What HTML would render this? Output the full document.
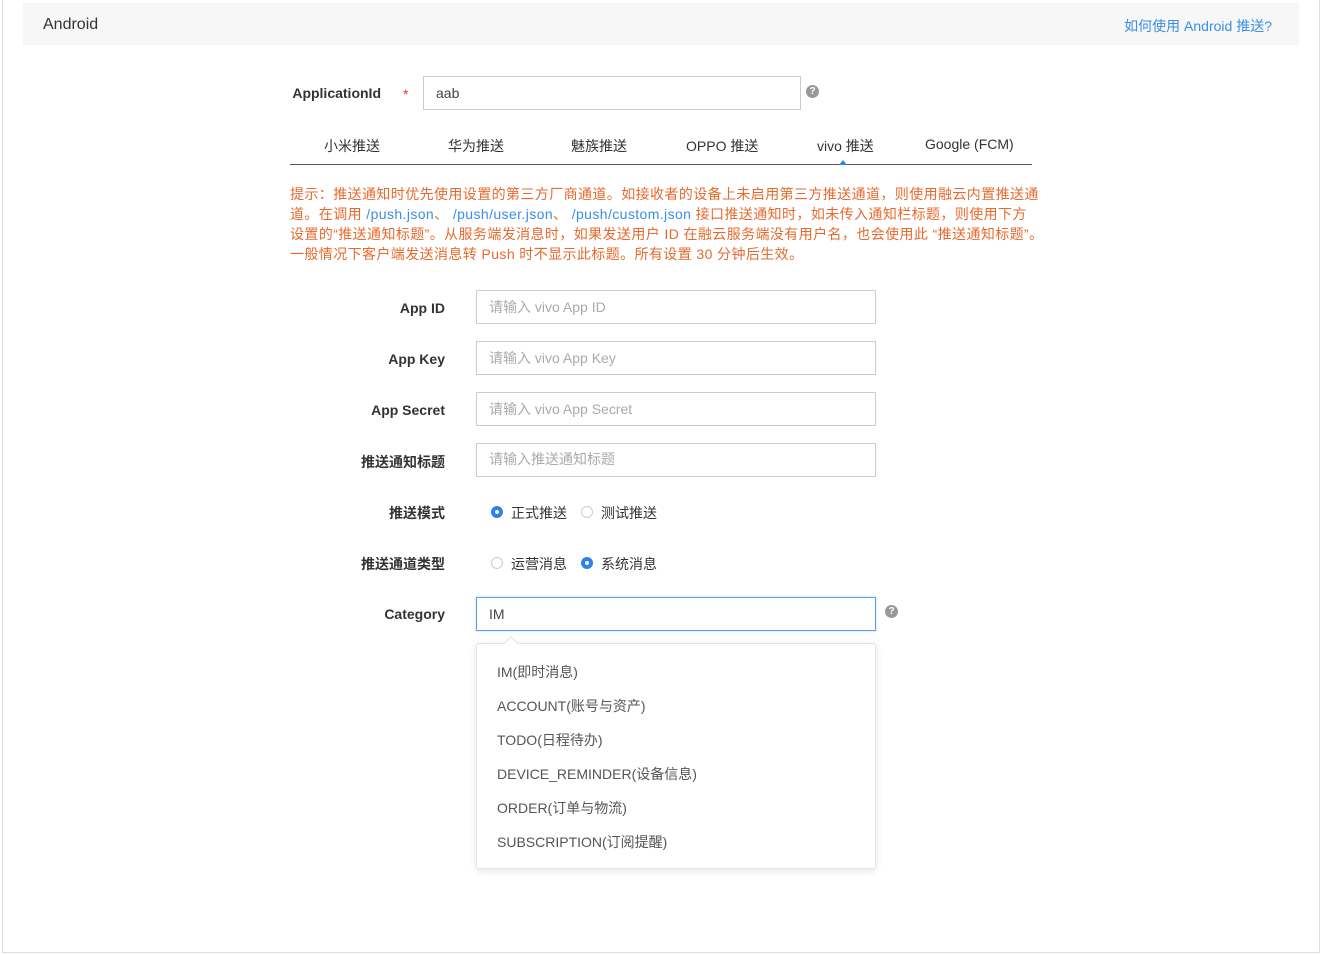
<!DOCTYPE html>
<html><head><meta charset="utf-8"><style>
*{box-sizing:border-box;margin:0;padding:0}
body{width:1323px;height:955px;background:#fff;font-family:"Liberation Sans","Noto Sans CJK SC",sans-serif;font-size:14px;color:#333;position:relative;overflow:hidden}
.frame{position:absolute;left:2px;top:0;width:1318px;height:953px;border-left:1px solid #ddd;border-right:1px solid #ddd;border-bottom:1px solid #ddd}
.hdr{position:absolute;left:23px;top:3px;width:1276px;height:42px;background:#f7f7f7}
.hdr .t{position:absolute;left:20px;top:13px;font-size:16px;color:#333}
.hdr a{position:absolute;right:27px;top:13px;color:#3a8ee6;font-size:14px;text-decoration:none}
.a{position:absolute}
.lbl{position:absolute;font-weight:bold;color:#333;text-align:right;width:150px}
.inp{position:absolute;border:1px solid #ccc;height:34px;padding-left:12px;line-height:32px;color:#aaa;background:#fff}
.q{position:absolute;width:13px;height:13px;border-radius:50%;background:#999;color:#fff;font-size:10px;font-weight:bold;text-align:center;line-height:13px}
.tab{position:absolute;top:136px;color:#333}
.tip{position:absolute;left:290px;top:184px;color:#e8692d;line-height:20px;font-size:14px;white-space:nowrap;letter-spacing:0.4px}
.tip span{color:#3a8ee6}
.r{position:absolute;width:12px;height:12px;border-radius:50%;border:1px solid #ccc;background:#fff}
.r.on{border:4px solid #2f7ff0;background:#fff}
.dd{position:absolute;left:476px;top:643px;width:400px;height:226px;border:1px solid #e4e4e4;border-radius:3px;box-shadow:0 2px 8px rgba(0,0,0,.1);background:#fff}
.dd div{position:absolute;left:20px;color:#555}
</style></head><body>
<div class="frame"></div>
<div class="hdr"><div class="t">Android</div><a>如何使用 Android 推送?</a></div>

<div class="lbl" style="left:231px;top:85px">ApplicationId</div>
<div class="a" style="left:403px;top:86px;color:#e33">*</div>
<div class="inp" style="left:423px;top:76px;width:378px;color:#444">aab</div>
<div class="q" style="left:806px;top:85px">?</div>

<div class="tab" style="left:324px">小米推送</div>
<div class="tab" style="left:448px">华为推送</div>
<div class="tab" style="left:571px">魅族推送</div>
<div class="tab" style="left:686px">OPPO 推送</div>
<div class="tab" style="left:817px">vivo 推送</div>
<div class="tab" style="left:925px">Google (FCM)</div>
<div class="a" style="left:290px;top:164px;width:742px;height:1px;background:#555"></div>
<div class="a" style="left:839px;top:160px;width:0;height:0;border-left:4px solid transparent;border-right:4px solid transparent;border-bottom:5px solid #2f7ff0"></div>

<div class="tip">提示：推送通知时优先使用设置的第三方厂商通道。如接收者的设备上未启用第三方推送通道，则使用融云内置推送通<br>道。在调用 <span>/push.json</span>、 <span>/push/user.json</span>、 <span>/push/custom.json</span> 接口推送通知时，如未传入通知栏标题，则使用下方<br>设置的“推送通知标题”。从服务端发消息时，如果发送用户 ID 在融云服务端没有用户名，也会使用此 “推送通知标题”。<br>一般情况下客户端发送消息转 Push 时不显示此标题。所有设置 30 分钟后生效。</div>

<div class="lbl" style="left:295px;top:300px">App ID</div>
<div class="inp" style="left:476px;top:290px;width:400px">请输入 vivo App ID</div>
<div class="lbl" style="left:295px;top:351px">App Key</div>
<div class="inp" style="left:476px;top:341px;width:400px">请输入 vivo App Key</div>
<div class="lbl" style="left:295px;top:402px">App Secret</div>
<div class="inp" style="left:476px;top:392px;width:400px">请输入 vivo App Secret</div>
<div class="lbl" style="left:295px;top:452px">推送通知标题</div>
<div class="inp" style="left:476px;top:443px;width:400px;line-height:31px">请输入推送通知标题</div>

<div class="lbl" style="left:295px;top:503px">推送模式</div>
<div class="r on" style="left:491px;top:506px"></div><div class="a" style="left:511px;top:503px">正式推送</div>
<div class="r" style="left:581px;top:506px"></div><div class="a" style="left:601px;top:503px">测试推送</div>
<div class="lbl" style="left:295px;top:554px">推送通道类型</div>
<div class="r" style="left:491px;top:557px"></div><div class="a" style="left:511px;top:554px">运营消息</div>
<div class="r on" style="left:581px;top:557px"></div><div class="a" style="left:601px;top:554px">系统消息</div>

<div class="lbl" style="left:295px;top:606px">Category</div>
<div class="inp" style="left:476px;top:597px;width:400px;border-color:#5a9de8;color:#444;box-shadow:0 0 2px rgba(58,142,230,.4)">IM</div>
<div class="q" style="left:885px;top:605px">?</div>

<div class="dd">
<div style="top:18px">IM(即时消息)</div>
<div style="top:52px">ACCOUNT(账号与资产)</div>
<div style="top:86px">TODO(日程待办)</div>
<div style="top:120px">DEVICE_REMINDER(设备信息)</div>
<div style="top:154px">ORDER(订单与物流)</div>
<div style="top:188px">SUBSCRIPTION(订阅提醒)</div>
</div>
<div class="a" style="left:506px;top:638px;width:10px;height:10px;background:#fff;border-left:1px solid #e4e4e4;border-top:1px solid #e4e4e4;transform:rotate(45deg)"></div>
</body></html>
